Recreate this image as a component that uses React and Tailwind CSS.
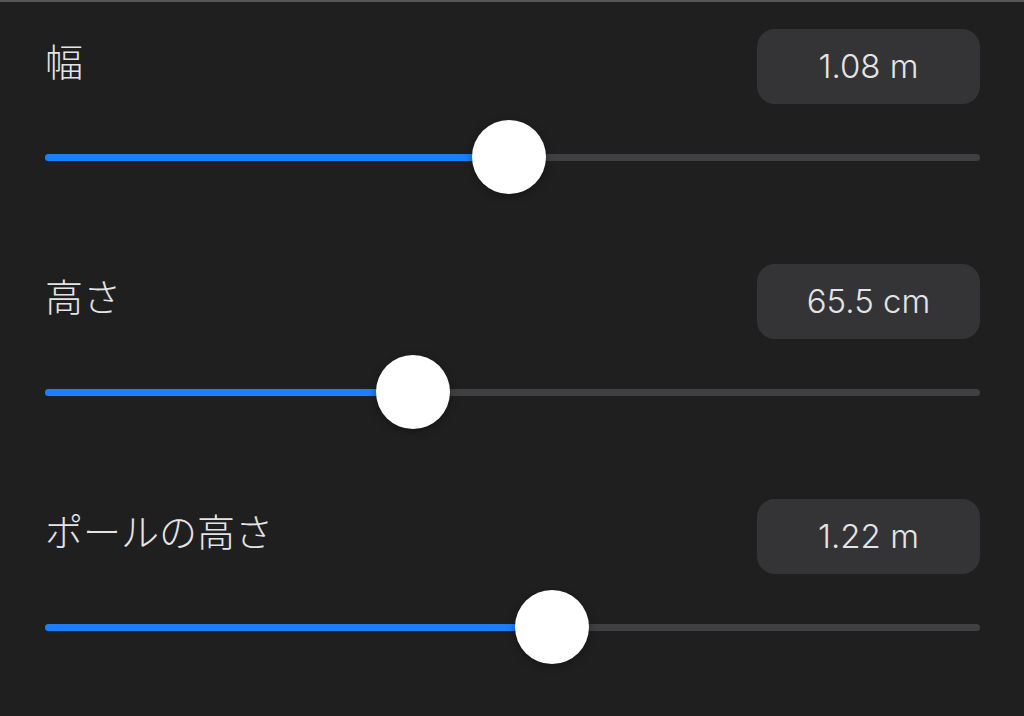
const rows = [
  { label: "幅", value: "1.08 m", pct: 0.496 },
  { label: "高さ", value: "65.5 cm", pct: 0.384 },
  { label: "ポールの高さ", value: "1.22 m", pct: 0.546 },
];

const THUMB = 74;

function SliderRow({ label, value, pct }) {
  // thumb center travels from THUMB/2 to width - THUMB/2
  const center = `calc(${THUMB / 2}px + (100% - ${THUMB}px) * ${pct})`;
  return (
    <div className="flex flex-col">
      <div className="flex items-center justify-between">
        <span className="mb-[10px] text-[38px] font-light leading-none text-[#e4e4e6]">{label}</span>
        <div className="flex h-[75px] w-[223px] items-center justify-center rounded-[18px] bg-[#343436] text-[33px] font-light text-[#e4e4e6]">
          {value}
        </div>
      </div>
      <div className="relative mt-4 flex h-[74px] items-center">
        <div className="h-[7px] w-full overflow-hidden rounded-full bg-[#404043]">
          <div className="h-full bg-[#1a80f6]" style={{ width: center }} />
        </div>
        <div
          className="absolute top-0 h-[74px] w-[74px] -translate-x-1/2 rounded-full bg-white shadow-[0_2px_8px_rgba(0,0,0,0.35)]"
          style={{ left: center }}
        />
      </div>
    </div>
  );
}

export default function App() {
  return (
    <div
      className="flex h-[716px] w-[1024px] flex-col gap-[70px] border-t-2 border-[#575758] bg-[#1f1f20] pb-[52px] pl-[45px] pr-[44px] pt-[27px]"
      style={{ fontFamily: '"Inter", "Noto Sans CJK JP", sans-serif' }}
    >
      {rows.map((r) => (
        <SliderRow key={r.label} {...r} />
      ))}
    </div>
  );
}
